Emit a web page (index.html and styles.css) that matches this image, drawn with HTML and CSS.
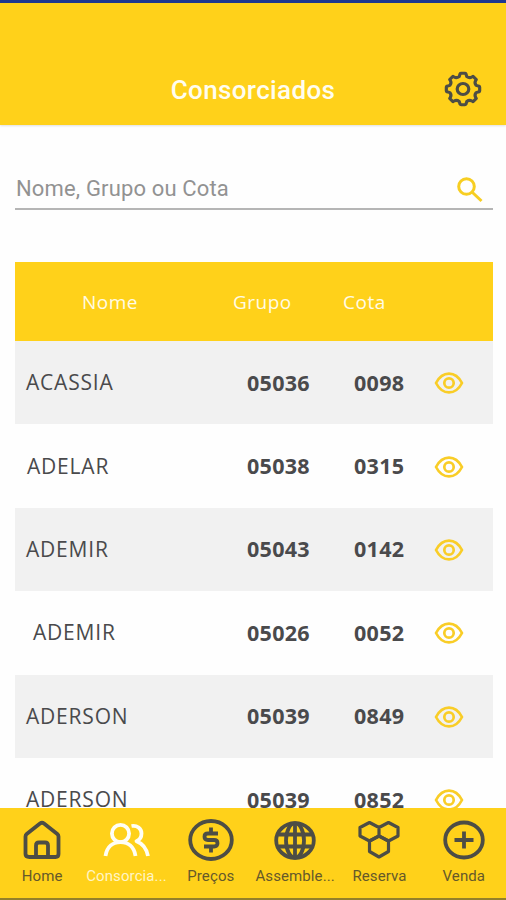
FILE: index.html
```
<!DOCTYPE html>
<html lang="pt-BR">
<head>
  <meta charset="UTF-8" />
  <meta name="viewport" content="width=device-width, initial-scale=1.0"/>
  <title>Consorciados</title>
  <link rel="stylesheet" href="styles.css">
</head>
<body>

  <!-- Shared icon -->
  <svg class="defs" width="0" height="0">
    <symbol id="eye" viewBox="0 0 30 24">
      <path d="M2 12C8.500 -.6 21.500 -.6 28 12C21.500 24.600 8.500 24.600 2 12Z"/>
      <circle cx="15" cy="12" r="4.700"/>
    </symbol>
  </svg>

  <header>
    <h1>Consorciados</h1>
    <button class="settings" title="Configurações">
      <svg width="38" height="36" viewBox="-18 -18 36 36" preserveAspectRatio="none">
        <path d="M-2.800-15.200Q-2.500-15.800-1.800-15.800H1.800Q2.500-15.800 2.800-15.200L3.600-12.400Q6-10.600 8.400-12L9.500-12.600L12.600-9.500L12-8.400Q10.600-6 12.400-3.600L15.200-2.800Q15.800-2.500 15.800-1.800V1.800Q15.800 2.500 15.200 2.800L12.400 3.600Q10.600 6 12 8.400L12.600 9.500L9.500 12.600L8.400 12Q6 10.600 3.600 12.400L2.800 15.200Q2.500 15.800 1.800 15.800H-1.800Q-2.500 15.800-2.800 15.200L-3.600 12.400Q-6 10.600-8.400 12L-9.500 12.600L-12.600 9.500L-12 8.400Q-10.600 6-12.400 3.600L-15.200 2.800Q-15.800 2.500-15.800 1.800V-1.800Q-15.800-2.500-15.200-2.800L-12.400-3.600Q-10.600-6-12-8.400L-12.600-9.500L-9.500-12.600L-8.400-12Q-6-10.600-3.600-12.400Z"/>
        <circle r="5.500"/>
      </svg>
    </button>
  </header>

  <main>
    <div class="search">
      <span class="placeholder">Nome, Grupo ou Cota</span>
      <svg width="28" height="26" viewBox="0 0 28 26">
        <circle cx="10.500" cy="9.500" r="7.800"/>
        <path d="M16 15L25.500 24"/>
      </svg>
    </div>

    <section class="table">
      <div class="row head">
        <span class="nome">Nome</span>
        <span class="grupo">Grupo</span>
        <span class="cota">Cota</span>
      </div>
      <div class="row">
        <span class="nome">ACASSIA</span>
        <span class="grupo">05036</span>
        <span class="cota">0098</span>
        <svg class="eye"><use href="#eye"/></svg>
      </div>
      <div class="row">
        <span class="nome adelar">ADELAR</span>
        <span class="grupo">05038</span>
        <span class="cota">0315</span>
        <svg class="eye"><use href="#eye"/></svg>
      </div>
      <div class="row">
        <span class="nome">ADEMIR</span>
        <span class="grupo">05043</span>
        <span class="cota">0142</span>
        <svg class="eye"><use href="#eye"/></svg>
      </div>
      <div class="row">
        <span class="nome indent">ADEMIR</span>
        <span class="grupo">05026</span>
        <span class="cota">0052</span>
        <svg class="eye"><use href="#eye"/></svg>
      </div>
      <div class="row">
        <span class="nome">ADERSON</span>
        <span class="grupo">05039</span>
        <span class="cota">0849</span>
        <svg class="eye"><use href="#eye"/></svg>
      </div>
      <div class="row">
        <span class="nome">ADERSON</span>
        <span class="grupo">05039</span>
        <span class="cota">0852</span>
        <svg class="eye"><use href="#eye"/></svg>
      </div>
    </section>
  </main>

  <!-- Bottom tabs -->
  <nav>
    <a class="tab">
      <svg viewBox="0 0 48 44">
        <path d="M7.500 17.500Q7.500 16 8.700 15L22 4.500Q24 3 26 4.500L39.300 15Q40.500 16 40.500 17.500V35Q40.500 38 37.500 38H11.500Q7.500 38 7.500 35Z"/>
        <path d="M18 38V26.500Q18 23.500 21 23.500H27Q30 23.500 30 26.500V38"/>
      </svg>
      <span>Home</span>
    </a>
    <a class="tab active">
      <svg viewBox="0 0 48 44">
        <circle cx="18.500" cy="14.500" r="8.600"/>
        <path d="M3.500 37C5 27.500 11 23.200 18.500 23.200S32 27.500 33.500 37"/>
        <path d="M29.500 7C35 6 39.500 9.500 39.500 14.500Q39.500 20 34.500 22.300C40.500 24.500 44.500 29.500 46 37"/>
      </svg>
      <span>Consorcia...</span>
    </a>
    <a class="tab">
      <svg viewBox="0 0 48 44">
        <ellipse cx="24" cy="21" rx="20.800" ry="19"/>
        <path d="M31 14.500H21Q17.500 14.500 17.500 17.700T21 21H27Q30.500 21 30.500 24.200T27 27.500H17M24 8.500V14.500M24 27.500V33.500"/>
      </svg>
      <span>Preços</span>
    </a>
    <a class="tab">
      <svg viewBox="0 0 48 44">
        <ellipse cx="24" cy="21.500" rx="18.800" ry="17.300"/>
        <ellipse cx="24" cy="21.500" rx="9" ry="17.300"/>
        <path d="M24 4V39M7.500 15.500H40.500M7.500 27.500H40.500"/>
      </svg>
      <span>Assemble...</span>
    </a>
    <a class="tab">
      <svg class="thin" viewBox="0 0 48 44">
        <path d="M14.500 3.500L24 8.500V17L14.500 22L5 17V8.500ZM33.500 3.500L43 8.500V17L33.500 22L24 17V8.500Z"/>
        <path d="M24 17L33.500 22V32.500L24 38L14.500 32.500V22Z"/>
      </svg>
      <span>Reserva</span>
    </a>
    <a class="tab">
      <svg viewBox="0 0 48 44">
        <ellipse cx="24" cy="21" rx="18.800" ry="17.500"/>
        <path d="M24 12.500V29.500M14.500 21H33.500"/>
      </svg>
      <span>Venda</span>
    </a>
  </nav>

</body>
</html>
```
FILE: styles.css
```
* {
  box-sizing: border-box;
}

body {
  margin: 0;
  height: 900px;
  display: flex;
  flex-direction: column;
  overflow: hidden;
  background: #fefefe;
  font-family: "Open Sans", sans-serif;
  color: #4a4a4c;
}

.defs {
  display: none;
}

svg {
  fill: none;
  stroke: #4d4d45;
  stroke-width: 3;
  stroke-linejoin: round;
}

header {
  flex: none;
  height: 125px;
  padding: 50px 24px 0 62px;
  display: grid;
  grid-template-columns: 1fr 38px;
  align-items: center;
  background: #ffd11a;
  border-top: 3px solid #1e3790;
  box-shadow: 0 1px 2px rgba(0, 0, 0, 0.12);
}

h1 {
  margin: 0;
  padding-top: 2px;
  text-align: center;
  font-family: Roboto, sans-serif;
  font-size: 26px;
  font-weight: 500;
  letter-spacing: 0.35px;
  color: #fffdf0;
}

.settings {
  padding: 0;
  border: none;
  background: none;
  height: 36px;
  cursor: pointer;
}

main {
  flex: 1;
  min-height: 0;
  overflow: hidden;
  padding: 47px 13px 0 15px;
}

.search {
  height: 38px;
  padding: 0 9px 3px 1px;
  display: flex;
  align-items: center;
  justify-content: space-between;
  border-bottom: 2px solid #b5b5b5;
}

.search svg {
  margin-top: 2px;
  stroke: #f7ce22;
}

.placeholder {
  font-family: Roboto, sans-serif;
  font-size: 22px;
  letter-spacing: 0.15px;
  color: #929292;
}

.table {
  margin-top: 52px;
}

.row {
  height: 83.4px;
  display: grid;
  grid-template-columns: 221px 107px 80px 30px;
  align-items: center;
  padding-left: 11px;
  font-size: 21.5px;
  letter-spacing: 0.3px;
}

.row:nth-child(even) {
  background: #f1f1f1;
}

.head {
  height: 79px;
  padding-left: 67px;
  grid-template-columns: 151px 110px 60px;
  background: #ffd11a;
  color: #fffbe6;
  font-size: 19px;
  letter-spacing: 0.5px;
}

.row:not(.head) .nome {
  font-size: 21px;
  letter-spacing: 0.8px;
}

.row:not(.head) span {
  padding-bottom: 1px;
}

.grupo,
.cota {
  font-weight: 700;
}

.head .grupo,
.head .cota {
  font-weight: 400;
}

.adelar {
  padding-left: 1px;
}

.indent {
  padding-left: 7px;
}

.eye {
  width: 30px;
  height: 24px;
  margin-top: 1px;
  stroke: #f9cd27;
  stroke-width: 2.7;
}

nav {
  flex: none;
  height: 92px;
  display: grid;
  grid-template-columns: repeat(6, 1fr);
  background: #ffd11a;
  border-bottom: 2px solid #94802a;
}

.tab {
  display: flex;
  flex-direction: column;
  align-items: center;
  padding-top: 11px;
  font-family: Roboto, sans-serif;
  font-size: 15px;
  line-height: 20px;
  letter-spacing: 0.1px;
  white-space: nowrap;
  color: #66592a;
}

.tab svg {
  width: 48px;
  height: 44px;
  margin-bottom: 3px;
  stroke-width: 3.8;
}

.tab .thin {
  stroke-width: 3.2;
}

.active {
  color: #fff5c5;
}

.active svg {
  stroke: #fffef5;
}
```
